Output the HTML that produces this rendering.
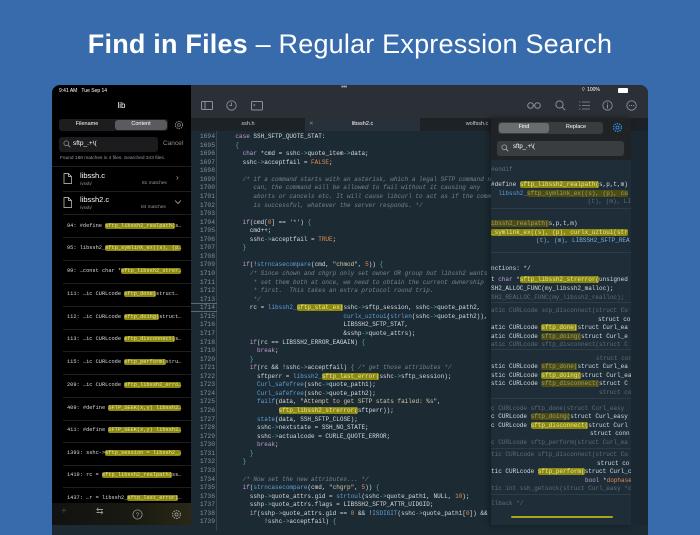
<!DOCTYPE html>
<html><head><meta charset="utf-8"><style>
*{margin:0;padding:0;box-sizing:border-box}
body{width:700px;height:525px;overflow:hidden;background:#386bac;font-family:"Liberation Sans",sans-serif;position:relative}
.abs{position:absolute}
.title{left:0;width:700px;top:29px;text-align:center;color:#fff;font-size:27px;letter-spacing:.2px}
.dev{left:52px;top:85px;width:596px;height:450px;border-radius:8px 8px 0 0;overflow:hidden;background:#1c2a33}
.side{left:0;top:0;width:139px;height:440px;background:#000;color:#fff}
.tb{left:139px;top:0;width:457px;height:33px;background:#2a3035}
.tabs{left:139px;top:33px;width:457px;height:13px;background:#1c2125;font-size:5.5px;color:#c9cdd1}
.tab{position:absolute;top:0;height:13px;line-height:13px;text-align:center}
.code{left:139px;top:46px;width:457px;height:400px;background:#1c2a33;overflow:hidden}
.gut{position:absolute;left:0;top:0;width:26px;height:400px;border-right:1px solid #34444f}
.ln{position:absolute;left:2px;width:22px;text-align:right;font:6.3px/8.56px "Liberation Mono",monospace;color:#7f919d}
pre{position:absolute;left:30px;top:2px;font:6px/8.56px "Liberation Mono",monospace;color:#d5dde3;letter-spacing:0}
.k{color:#c39bd3}.f{color:#5ea2dc}.o{color:#e68a4e}.c{color:#73848f;font-style:italic}.p{color:#5fb0ad}.s{color:#d6c9a8}
.h{background:#8c8912;color:#ece7a0;border-radius:2px}
.hd{background:#4d4c17;color:#a19f64;border-radius:2px}
.mrow{position:absolute;left:15px;width:124px;font:5.3px/8px "Liberation Mono",monospace;color:#d8d8d8;white-space:pre;overflow:hidden}
.sep{position:absolute;left:11px;right:0;height:1px;background:#1f1f1f}
.rp{left:439px;top:33px;width:140px;height:407px;background:#1e2d37;overflow:hidden;box-shadow:-2px 0 6px rgba(0,0,0,.35)}
.rl{position:absolute;left:0;width:140px;font:6px/8.56px "Liberation Mono",monospace;color:#d5dde3;white-space:pre;overflow:hidden}
.dim{opacity:.35}
.rsep{position:absolute;left:0;width:140px;height:1px;background:#2d3d48}
</style></head><body>
<div class="abs title"><b>Find in Files</b> – Regular Expression Search</div>
<div class="abs dev">
 <div class="abs side">
  <div class="abs" style="left:7px;top:3px;font-size:5px">9:41 AM&nbsp;&nbsp; Tue Sep 14</div>
  <div class="abs" style="left:0;width:139px;top:16px;text-align:center;font-size:8px">lib</div>
  <div class="abs" style="left:7px;top:34px;width:109px;height:12px;background:#1d1d1f;border-radius:3px"></div>
  <div class="abs" style="left:63px;top:35px;width:52px;height:10px;background:#5b5b5f;border-radius:3px"></div>
  <div class="abs" style="left:7px;top:36px;width:56px;text-align:center;font-size:5.5px">Filename</div>
  <div class="abs" style="left:63px;top:36px;width:52px;text-align:center;font-size:5.5px">Content</div>
  <svg class="abs" style="left:122px;top:35px" width="10" height="10" viewBox="0 0 10 10"><circle cx="5" cy="5" r="3.6" fill="none" stroke="#8e8e93" stroke-width="1" stroke-dasharray="1.4 .9"/><circle cx="5" cy="5" r="1.4" fill="none" stroke="#8e8e93" stroke-width=".8"/></svg>
  <div class="abs" style="left:7px;top:52px;width:99px;height:15px;background:#1c1c1e;border-radius:3px"></div>
  <svg class="abs" style="left:11px;top:55px" width="8" height="8" viewBox="0 0 8 8"><circle cx="3.3" cy="3.3" r="2.4" fill="none" stroke="#8e8e93" stroke-width=".8"/><path d="M5 5 L7.3 7.3" stroke="#8e8e93" stroke-width=".9"/></svg>
  <div class="abs" style="left:21px;top:55px;font-size:6.5px">sftp_.+\(</div>
  <div class="abs" style="left:111px;top:55px;font-size:6.5px;color:#8e8e93">Cancel</div>
  <div class="abs" style="left:8px;top:71px;font-size:4.8px;color:#9a9a9e">Found 188 matches in 4 files. Searched 343 files.</div>
  <div class="sep" style="top:81px;left:0"></div>
  <svg class="abs" style="left:11px;top:88px" width="9" height="11" viewBox="0 0 9 11"><path d="M1 .5h4.5l3 3v7H1z M5.5 .5v3h3" fill="none" stroke="#cfcfcf" stroke-width=".7"/></svg>
  <div class="abs" style="left:28px;top:86px;font-size:7.5px">libssh.c</div>
  <div class="abs" style="left:28px;top:96px;font-size:4.5px;color:#999">/vssh/</div>
  <div class="abs" style="left:90px;top:96px;font-size:4.8px;color:#999">81 matches</div>
  <div class="abs" style="left:124px;top:88px;font-size:8px;color:#aaa">›</div>
  <div class="sep" style="top:106px"></div>
  <svg class="abs" style="left:11px;top:112px" width="9" height="11" viewBox="0 0 9 11"><path d="M1 .5h4.5l3 3v7H1z M5.5 .5v3h3" fill="none" stroke="#cfcfcf" stroke-width=".7"/></svg>
  <div class="abs" style="left:28px;top:110px;font-size:7.5px">libssh2.c</div>
  <div class="abs" style="left:28px;top:120px;font-size:4.5px;color:#999">/vssh/</div>
  <div class="abs" style="left:89px;top:120px;font-size:4.8px;color:#999">84 matches</div>
  <svg class="abs" style="left:122px;top:114px" width="8" height="6" viewBox="0 0 8 6"><path d="M1 1.5l3 3 3-3" fill="none" stroke="#aaa" stroke-width=".8"/></svg>
  <div class="sep" style="top:129px"></div>
  <div class="mrow" style="top:137px">94: #define <span class="h">sftp_libssh2_realpath(</span>s…</div>
  <div class="sep" style="top:152px"></div>
  <div class="mrow" style="top:159px">95: libssh2_<span class="h">sftp_symlink_ex((s), (p…</span></div>
  <div class="sep" style="top:175px"></div>
  <div class="mrow" style="top:182px">99: …const char *<span class="h">sftp_libssh2_strer…</span></div>
  <div class="sep" style="top:198px"></div>
  <div class="mrow" style="top:205px">111: …ic CURLcode <span class="h">sftp_done(</span>struct…</div>
  <div class="sep" style="top:221px"></div>
  <div class="mrow" style="top:228px">112: …ic CURLcode <span class="h">sftp_doing(</span>struct…</div>
  <div class="sep" style="top:244px"></div>
  <div class="mrow" style="top:250px">113: …ic CURLcode <span class="h">sftp_disconnect(</span>s…</div>
  <div class="sep" style="top:266px"></div>
  <div class="mrow" style="top:273px">115: …ic CURLcode <span class="h">sftp_perform(</span>stru…</div>
  <div class="sep" style="top:289px"></div>
  <div class="mrow" style="top:296px">209: …ic CURLcode <span class="h">sftp_libssh2_erro…</span></div>
  <div class="sep" style="top:312px"></div>
  <div class="mrow" style="top:319px">409: #define <span class="h">SFTP_SEEK(x,y) libssh2…</span></div>
  <div class="sep" style="top:335px"></div>
  <div class="mrow" style="top:341px">411: #define <span class="h">SFTP_SEEK(x,y) libssh2…</span></div>
  <div class="sep" style="top:357px"></div>
  <div class="mrow" style="top:364px">1393: sshc-&gt;<span class="h">sftp_session = libssh2_…</span></div>
  <div class="sep" style="top:380px"></div>
  <div class="mrow" style="top:386px">1419: rc = <span class="h">sftp_libssh2_realpath(</span>ss…</div>
  <div class="sep" style="top:402px"></div>
  <div class="mrow" style="top:409px">1437: …r = libssh2_<span class="h">sftp_last_error(</span>…</div>
  <div class="abs" style="left:0;top:418px;width:139px;height:22px;background:linear-gradient(90deg,#111 0%,#1a1a12 60%,#2a2815 100%)"></div>
  <div class="abs" style="left:9px;top:421px;font-size:10px;color:#444">+</div>
  <div class="abs" style="left:44px;top:421px;font-size:9px;color:#999">⇆</div>
  <svg class="abs" style="left:80px;top:424px" width="11" height="11" viewBox="0 0 11 11"><circle cx="5.5" cy="5.5" r="4.6" fill="none" stroke="#999" stroke-width=".8"/><text x="5.5" y="8" font-size="6.5" text-anchor="middle" fill="#999" font-family="Liberation Sans">?</text></svg>
  <svg class="abs" style="left:119px;top:424px" width="11" height="11" viewBox="0 0 10 10"><circle cx="5" cy="5" r="3.6" fill="none" stroke="#999" stroke-width="1" stroke-dasharray="1.4 .9"/><circle cx="5" cy="5" r="1.4" fill="none" stroke="#999" stroke-width=".8"/></svg>
 </div>
 <div class="abs tb">
  <div class="abs" style="left:150px;top:-1px;color:#aaa;font-size:7px;letter-spacing:-.5px">•••</div>
  <div class="abs" style="left:390px;top:2px;color:#fff;font-size:5px">⌔ 100%</div>
  <div class="abs" style="left:427px;top:3px;width:10px;height:5px;background:#fff;border-radius:1px"></div>
  <svg class="abs" style="left:10px;top:16px" width="12" height="10" viewBox="0 0 12 10"><rect x=".5" y=".5" width="11" height="8" rx="1" fill="none" stroke="#8a9096"/><path d="M4 .5v8" stroke="#8a9096"/></svg>
  <svg class="abs" style="left:35px;top:15px" width="11" height="11" viewBox="0 0 11 11"><circle cx="5.5" cy="5.5" r="4.7" fill="none" stroke="#8a9096" stroke-width=".9"/><path d="M5.5 2.5v3h-2" fill="none" stroke="#8a9096" stroke-width=".9"/></svg>
  <svg class="abs" style="left:60px;top:16px" width="12" height="10" viewBox="0 0 12 10"><rect x=".5" y=".5" width="11" height="8.5" rx="1" fill="none" stroke="#8a9096"/><path d="M2.5 3l1.5 1-1.5 1" fill="none" stroke="#8a9096" stroke-width=".7"/></svg>
  <svg class="abs" style="left:336px;top:17px" width="14" height="7" viewBox="0 0 14 7"><circle cx="3.5" cy="3.5" r="2.8" fill="none" stroke="#8a9096"/><circle cx="10.5" cy="3.5" r="2.8" fill="none" stroke="#8a9096"/><path d="M6.3 3.5h1.4" stroke="#8a9096"/></svg>
  <svg class="abs" style="left:364px;top:15px" width="11" height="11" viewBox="0 0 11 11"><circle cx="4.5" cy="4.5" r="3.6" fill="none" stroke="#8a9096"/><path d="M7 7l3.3 3.3" stroke="#8a9096"/></svg>
  <svg class="abs" style="left:388px;top:16px" width="11" height="9" viewBox="0 0 11 9"><path d="M0 1h1.5M3 1h8M0 4.5h1.5M3 4.5h8M0 8h1.5M3 8h8" stroke="#8a9096" stroke-width=".8"/></svg>
  <svg class="abs" style="left:411px;top:15px" width="11" height="11" viewBox="0 0 11 11"><circle cx="5.5" cy="5.5" r="4.7" fill="none" stroke="#8a9096" stroke-width=".9"/><path d="M5.5 4.5v4M5.5 2.5v1" stroke="#8a9096"/></svg>
  <svg class="abs" style="left:435px;top:15px" width="11" height="11" viewBox="0 0 11 11"><circle cx="5.5" cy="5.5" r="4.7" fill="none" stroke="#8a9096" stroke-width=".9"/><path d="M3 5.5h1M5 5.5h1M7 5.5h1" stroke="#8a9096"/></svg>
 </div>
 <div class="abs tabs">
  <div class="tab" style="left:0;width:114px;background:#1d2226">ssh.h</div>
  <div class="tab" style="left:114px;width:115px;background:#283139;color:#fff"><span style="position:absolute;left:4px;color:#888">✕</span>libssh2.c</div>
  <div class="tab" style="left:229px;width:114px;background:#1d2226">wolfssh.c</div>
 </div>
 <div class="abs code">
  <div class="gut"></div>
  <div class="abs" style="left:0;top:172px;width:26px;height:9px;border-top:1px solid #5a6b77;border-bottom:1px solid #5a6b77"></div>
  <div class="ln" style="top:2px">1694<br>1695<br>1696<br>1697<br>1698<br>1699<br>1700<br>1701<br>1702<br>1703<br>1704<br>1705<br>1706<br>1707<br>1708<br>1709<br>1710<br>1711<br>1712<br>1713<br>1714<br>1715<br>1716<br>1717<br>1718<br>1719<br>1720<br>1721<br>1722<br>1723<br>1724<br>1725<br>1726<br>1727<br>1728<br>1729<br>1730<br>1731<br>1732<br>1733<br>1734<br>1735<br>1736<br>1737<br>1738<br>1739</div>
<pre>    <span class="k">case</span> SSH_SFTP_QUOTE_STAT:
    <span class="p">{</span>
      <span class="k">char</span> *cmd = sshc<span class="p">-&gt;</span>quote_item<span class="p">-&gt;</span>data;
      sshc<span class="p">-&gt;</span>acceptfail = <span class="o">FALSE</span>;

      <span class="c">/* if a command starts with an asterisk, which a legal SFTP command never
         can, the command will be allowed to fail without it causing any
         aborts or cancels etc. It will cause libcurl to act as if the command
         is successful, whatever the server responds. */</span>

      <span class="k">if</span>(cmd[<span class="o">0</span>] == <span class="s">'*'</span>) <span class="p">{</span>
        cmd++;
        sshc<span class="p">-&gt;</span>acceptfail = <span class="o">TRUE</span>;
      <span class="p">}</span>

      <span class="k">if</span>(!<span class="f">strncasecompare</span>(cmd, <span class="s">"chmod"</span>, <span class="o">5</span>)) <span class="p">{</span>
        <span class="c">/* Since chown and chgrp only set owner OR group but libssh2 wants to
         * set them both at once, we need to obtain the current ownership
         * first.  This takes an extra protocol round trip.
         */</span>
        rc = <span class="f">libssh2_</span><span class="h">sftp_stat_ex(</span>sshc<span class="p">-&gt;</span>sftp_session, sshc<span class="p">-&gt;</span>quote_path2,
                                  <span class="f">curlx_uztoui</span>(<span class="f">strlen</span>(sshc<span class="p">-&gt;</span>quote_path2)),
                                  LIBSSH2_SFTP_STAT,
                                  &amp;sshp<span class="p">-&gt;</span>quote_attrs);
        <span class="k">if</span>(rc == LIBSSH2_ERROR_EAGAIN) <span class="p">{</span>
          <span class="k">break</span>;
        <span class="p">}</span>
        <span class="k">if</span>(rc &amp;&amp; !sshc<span class="p">-&gt;</span>acceptfail) <span class="p">{</span> <span class="c">/* get those attributes */</span>
          sftperr = <span class="f">libssh2_</span><span class="h">sftp_last_error(</span>sshc<span class="p">-&gt;</span>sftp_session);
          <span class="f">Curl_safefree</span>(sshc<span class="p">-&gt;</span>quote_path1);
          <span class="f">Curl_safefree</span>(sshc<span class="p">-&gt;</span>quote_path2);
          <span class="f">failf</span>(data, <span class="s">"Attempt to get SFTP stats failed: %s"</span>,
                <span class="h">sftp_libssh2_strerror(</span>sftperr));
          <span class="f">state</span>(data, SSH_SFTP_CLOSE);
          sshc<span class="p">-&gt;</span>nextstate = SSH_NO_STATE;
          sshc<span class="p">-&gt;</span>actualcode = CURLE_QUOTE_ERROR;
          <span class="k">break</span>;
        <span class="p">}</span>
      <span class="p">}</span>

      <span class="c">/* Now set the new attributes... */</span>
      <span class="k">if</span>(<span class="f">strncasecompare</span>(cmd, <span class="s">"chgrp"</span>, <span class="o">5</span>)) <span class="p">{</span>
        sshp<span class="p">-&gt;</span>quote_attrs.gid = <span class="f">strtoul</span>(sshc<span class="p">-&gt;</span>quote_path1, NULL, <span class="o">10</span>);
        sshp<span class="p">-&gt;</span>quote_attrs.flags = LIBSSH2_SFTP_ATTR_UIDGID;
        <span class="k">if</span>(sshp<span class="p">-&gt;</span>quote_attrs.gid == <span class="o">0</span> &amp;&amp; !<span class="f">ISDIGIT</span>(sshc<span class="p">-&gt;</span>quote_path1[<span class="o">0</span>]) &amp;&amp;
            !sshc<span class="p">-&gt;</span>acceptfail) <span class="p">{</span></pre>
 </div>
 <div class="abs rp">
  <div class="abs" style="left:0;top:0;width:140px;height:42px;background:#1f2326"></div>
  <div class="abs" style="left:7px;top:4px;width:105px;height:12px;background:#3a3d40;border-radius:3px"></div>
  <div class="abs" style="left:8px;top:5px;width:50px;height:10px;background:#6a6d70;border-radius:3px"></div>
  <div class="abs" style="left:8px;top:6px;width:50px;text-align:center;font-size:5.5px;color:#fff">Find</div>
  <div class="abs" style="left:58px;top:6px;width:54px;text-align:center;font-size:5.5px;color:#fff">Replace</div>
  <svg class="abs" style="left:121px;top:4px" width="11" height="11" viewBox="0 0 10 10"><circle cx="5" cy="5" r="3.6" fill="none" stroke="#2f8fe6" stroke-width="1.1" stroke-dasharray="1.4 .9"/><circle cx="5" cy="5" r="1.4" fill="none" stroke="#2f8fe6" stroke-width=".8"/></svg>
  <div class="abs" style="left:6px;top:23px;width:127px;height:15px;background:#3a3d40;border-radius:3px"></div>
  <svg class="abs" style="left:10px;top:26px" width="8" height="8" viewBox="0 0 8 8"><circle cx="3.3" cy="3.3" r="2.4" fill="none" stroke="#aaa" stroke-width=".8"/><path d="M5 5 L7.3 7.3" stroke="#aaa" stroke-width=".9"/></svg>
  <div class="abs" style="left:22px;top:26px;font-size:6px;color:#fff">sftp_.+\(</div>
  <div class="rl dim" style="top:48px">#endif</div>
  <div class="rl" style="top:63px">#define <span class="h">sftp_libssh2_realpath(</span>s,p,t,m)</div>
  <div class="rl" style="top:72px">  <span class="f">libssh2_</span><span class="hd">sftp_symlink_ex((s), (p), cu</span></div>
  <div class="rl dim" style="top:80px;text-align:right">(t), (m), LI</div>
  <div class="rsep" style="top:90px"></div>
  <div class="rl" style="top:102px"><span class="hd">ibssh2_realpath(</span>s,p,t,m)</div>
  <div class="rl" style="top:111px"><span class="h">_symlink_ex((s), (p), curlx_uztoui(str</span></div>
  <div class="rl" style="top:119px;left:45px;color:#7fb0d8">(t), (m), LIBSSH2_SFTP_REA</div>
  <div class="rsep" style="top:134px"></div>
  <div class="rl c" style="top:147px">nctions: */</div>
  <div class="rl" style="top:158px">t <span class="k">char</span> *<span class="h">sftp_libssh2_strerror(</span>unsigned</div>
  <div class="rl f" style="top:167px">SH2_ALLOC_FUNC(my_libssh2_malloc);</div>
  <div class="rl f dim" style="top:176px">SH2_REALLOC_FUNC(my_libssh2_realloc);</div>
  <div class="rsep" style="top:184px"></div>
  <div class="rl dim" style="top:189px">atic CURLcode scp_disconnect(struct Cu</div>
  <div class="rl" style="top:198px;left:107px">struct co</div>
  <div class="rl" style="top:206px">atic CURLcode <span class="h">sftp_done(</span>struct Curl_ea</div>
  <div class="rl" style="top:215px">atic CURLcode <span class="hd">sftp_doing(</span>struct Curl_e</div>
  <div class="rl dim" style="top:223px">atic CURLcode sftp_disconnect(struct C</div>
  <div class="rsep" style="top:231px"></div>
  <div class="rl dim" style="top:237px;left:105px">struct con</div>
  <div class="rl" style="top:245px">stic CURLcode <span class="hd">sftp_done(</span>struct Curl_ea</div>
  <div class="rl" style="top:254px">stic CURLcode <span class="h">sftp_doing(</span>struct Curl_ea</div>
  <div class="rl" style="top:262px">stic CURLcode <span class="hd">sftp_disconnect(</span>struct C</div>
  <div class="rl dim" style="top:271px;left:108px">struct co</div>
  <div class="rsep" style="top:280px"></div>
  <div class="rl dim" style="top:287px">c CURLcode sftp_done(struct Curl_easy</div>
  <div class="rl" style="top:295px">c CURLcode <span class="hd">sftp_doing(</span>struct Curl_easy</div>
  <div class="rl" style="top:304px">c CURLcode <span class="h">sftp_disconnect(</span>struct Curl</div>
  <div class="rl" style="top:312px;left:99px">struct conn</div>
  <div class="rl dim" style="top:321px">c CURLcode sftp_perform(struct Curl_ea</div>
  <div class="rsep" style="top:330px"></div>
  <div class="rl dim" style="top:333px">tic CURLcode sftp_disconnect(struct Cu</div>
  <div class="rl" style="top:342px;left:106px">struct co</div>
  <div class="rl" style="top:350px">tic CURLcode <span class="h">sftp_perform(</span>struct Curl_c</div>
  <div class="rl" style="top:359px;left:94px"><span class="k">bool</span> *<span class="o">dophase</span></div>
  <div class="rl dim" style="top:367px">tic int ssh_getsock(struct Curl_easy *c</div>
  <div class="rsep" style="top:376px"></div>
  <div class="rl c dim" style="top:382px">llback */</div>
  <div class="abs" style="left:20px;top:398px;width:102px;height:2px;background:#a8a51a;border-radius:1px"></div>
 </div>
 <div class="abs" style="left:579px;top:46px;width:17px;height:394px;background:#1a2730"></div>
</div>
</body></html>
